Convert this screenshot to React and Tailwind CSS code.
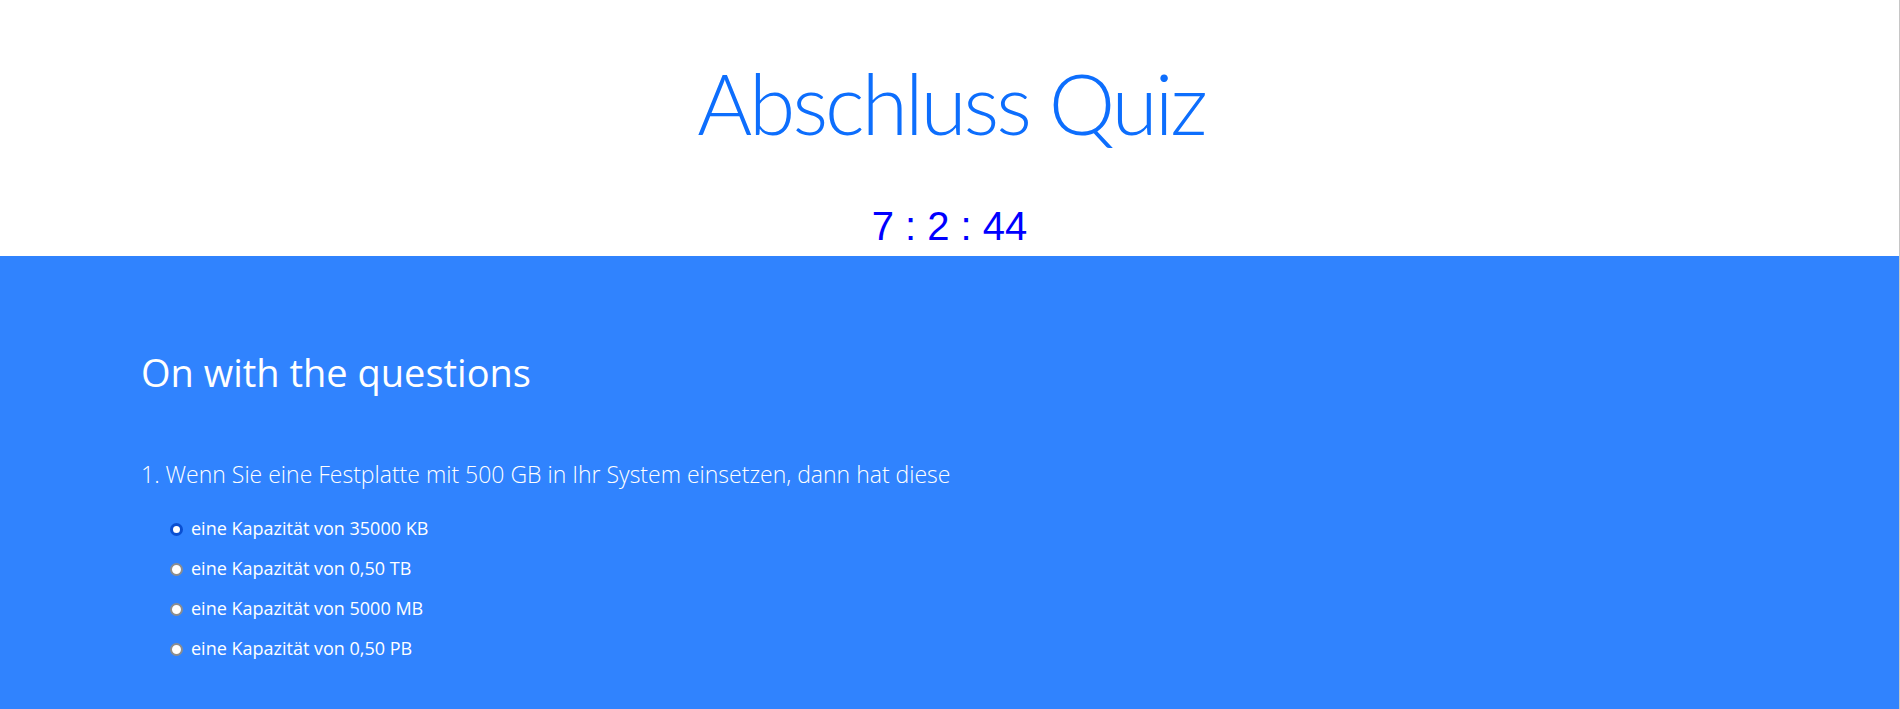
import { useState } from "react";

const options = [
  "eine Kapazität von 35000 KB",
  "eine Kapazität von 0,50 TB",
  "eine Kapazität von 5000 MB",
  "eine Kapazität von 0,50 PB",
];

const App = () => {
  const [selected, setSelected] = useState(0);

  return (
    <div className="min-h-[709px] border-r border-[#c6c6c6] font-['Segoe_UI','Open_Sans',sans-serif]">
      <header className="flex h-[256px] flex-col items-center bg-white pt-[53px]">
        <h1 className="pl-[3px] font-['Lato',sans-serif] text-[84px] font-light leading-[1.2] tracking-[-3px] text-[#0d6efd]">
          Abschluss Quiz
        </h1>
        <div className="mt-[48px] font-['Liberation_Sans',Arial,sans-serif] text-[40px] leading-[1.2] text-[#0000ff]">
          7 : 2 : 44
        </div>
      </header>

      <main className="min-h-[453px] bg-[#3083fe] px-[141px] pt-[94px] pb-10 text-white">
        <h2 className="text-[38px] leading-[1.2]">On with the questions</h2>

        <p className="mt-[61px] text-[23px] font-light leading-[1.5]">
          1. Wenn Sie eine Festplatte mit 500 GB in Ihr System einsetzen, dann hat diese
        </p>

        <div className="mt-[25px] flex flex-col gap-4 pl-[29px]">
          {options.map((opt, i) => (
            <label key={opt} className="flex cursor-pointer items-center gap-2 text-[18px] leading-6">
              <span
                onClick={() => setSelected(i)}
                className={
                  i === selected
                    ? "mt-[3px] h-[13px] w-[13px] rounded-full border-[3px] border-[#0a4fd1] bg-white"
                    : "mt-[3px] h-[13px] w-[13px] rounded-full border-2 border-[#8d8d8d] bg-white"
                }
              />
              <span>{opt}</span>
            </label>
          ))}
        </div>
      </main>
    </div>
  );
};

export default App;
